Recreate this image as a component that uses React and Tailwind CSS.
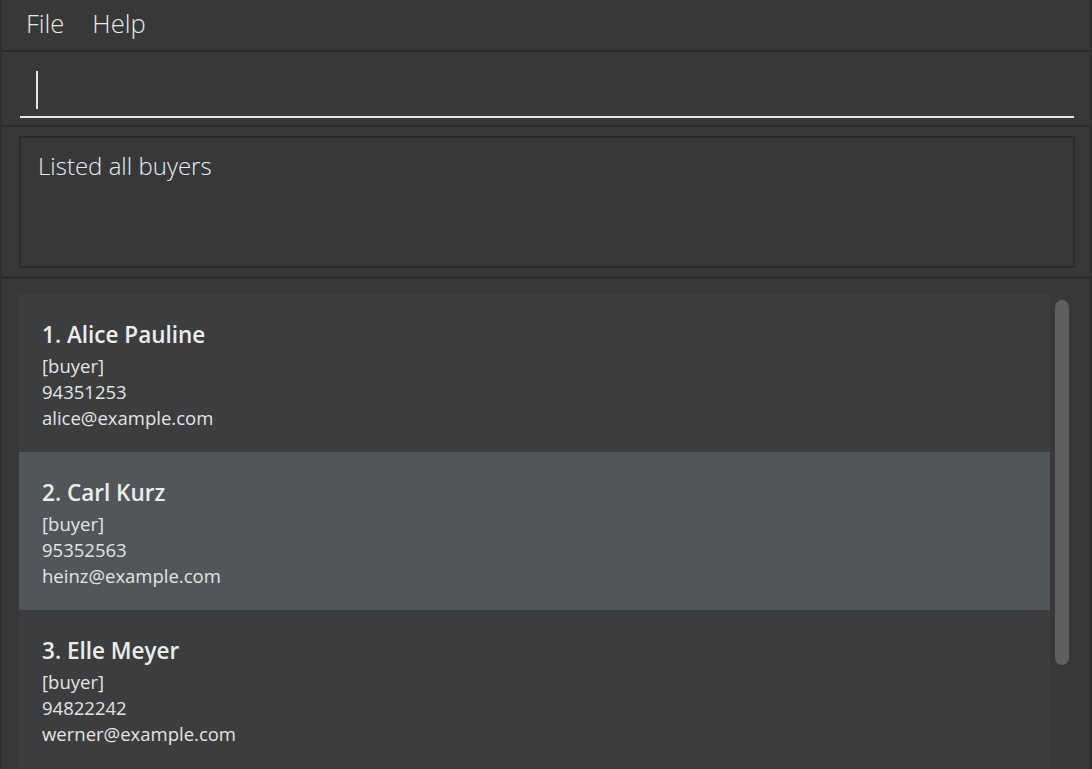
import React from 'react';

const buyers = [
  { id: 1, name: 'Alice Pauline', tag: 'buyer', phone: '94351253', email: 'alice@example.com' },
  { id: 2, name: 'Carl Kurz', tag: 'buyer', phone: '95352563', email: 'heinz@example.com', selected: true },
  { id: 3, name: 'Elle Meyer', tag: 'buyer', phone: '94822242', email: 'werner@example.com' },
];

const BuyerCard = ({ index, buyer }) => (
  <div
    className={`h-[158px] shrink-0 pl-[23px] pt-[26px] ${buyer.selected ? 'bg-[#515658]' : 'bg-[#3c3d3f]'}`}
  >
    <div className="text-[22.5px] leading-[30px] font-semibold text-[#ececec]">
      {index}. {buyer.name}
    </div>
    <div className="mt-[3px] text-[18.5px] leading-[26px] text-[#e4e4e4]">
      <div>[{buyer.tag}]</div>
      <div>{buyer.phone}</div>
      <div>{buyer.email}</div>
    </div>
  </div>
);

export default function App() {
  return (
    <div
      className="w-[1092px] h-[769px] overflow-hidden bg-[#383838] flex flex-col border-l-2 border-r-2 border-[#2e2e2e]"
      style={{ fontFamily: '"Open Sans", "Noto Sans", sans-serif' }}
    >
      {/* Menu bar */}
      <div className="h-[50px] shrink-0 flex items-center gap-[28px] pl-[24px] pb-[4px] text-[25.5px] font-light text-[#e8e8e8]">
        <span>File</span>
        <span>Help</span>
      </div>

      {/* Command box */}
      <div className="h-[77px] shrink-0 border-y-2 border-[#2b2b2b] pl-[18px] pr-[16px] flex items-end pb-[7px]">
        <div className="w-full h-[50px] border-b-2 border-[#e6e6e6] flex items-center pl-[16px] pb-[4px]">
          <div className="w-[2px] h-[38px] bg-[#e6e6e6]"></div>
        </div>
      </div>

      {/* Result display */}
      <div className="h-[152px] shrink-0 border-b-[3px] border-[#2b2b2b] pl-[17px] pr-[15px] pt-[9px]">
        <div className="h-[132px] border-2 border-[#2b2b2b] pl-[17px] pt-[10px] text-[24px] font-light text-[#e6eef8]">
          Listed all buyers
        </div>
      </div>

      {/* Buyer list */}
      <div className="flex-1 min-h-0 flex pl-[17px] pt-[15px]">
        <div className="w-[1031px] flex flex-col">
          {buyers.map((b, i) => (
            <BuyerCard key={b.id} index={i + 1} buyer={b} />
          ))}
        </div>
        <div className="ml-[5px] pt-[6px]">
          <div className="w-[14px] h-[365px] rounded-full bg-[#5f5f5f]"></div>
        </div>
      </div>
    </div>
  );
}
